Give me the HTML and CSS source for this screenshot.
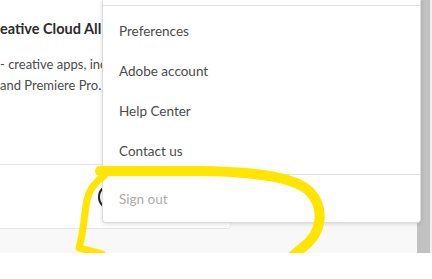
FILE: index.html
```html
<!DOCTYPE html>
<html lang="en">
<head>
  <meta charset="UTF-8">
  <title>Account Menu</title>
  <link rel="stylesheet" href="styles.css">
</head>
<body>
  <div class="screen">
    <div class="page">
      <div class="main">
        <div class="card">
          <div class="card-body">
            <div class="card-text">
              <div class="card-title">eative Cloud All</div>
              <p class="card-desc">- creative apps, inc<br>and Premiere Pro.</p>
            </div>
          </div>
          <div class="card-foot">
            <div class="round-btn"></div>
          </div>
        </div>
      </div>
      <div class="scrollbar">
        <div class="thumb"></div>
      </div>
    </div>

    <div class="menu">
      <div class="menu-top"></div>
      <ul class="menu-list">
        <li>Preferences</li>
        <li>Adobe account</li>
        <li>Help Center</li>
        <li>Contact us</li>
      </ul>
      <div class="menu-item signout">Sign out</div>
    </div>

    <svg class="scribble" width="432" height="253" viewBox="0 0 432 253">
      <path d="M100 171 L200 171 C262 172 297 178 310 192 C324 207 324 232 302 248 L290 258" fill="none" stroke="#ffe500" stroke-width="10" stroke-linecap="round" stroke-linejoin="round"/>
      <path d="M104 176 C95 182 89 190 87 200 C84 215 84 230 79 248 L102 254" fill="none" stroke="#ffe500" stroke-width="7" stroke-linecap="round" stroke-linejoin="round"/>
    </svg>
  </div>
</body>
</html>
```

FILE: styles.css
```css
body {
  margin: 0;
  background: #fff;
  font-family: Lato, "Open Sans", sans-serif;
}
.screen {
  position: relative;
  width: 432px;
  height: 253px;
  overflow: hidden;
}
.page {
  display: flex;
  height: 253px;
}
.main {
  flex: 1;
  background: #f8f8f8;
  overflow: hidden;
}
.card {
  width: 231px;
  background: #fff;
  border-bottom: 1px solid #e4e4e4;
  border-right: 1px solid #ececec;
  border-bottom-right-radius: 4px;
  box-sizing: border-box;
}
.card-body {
  height: 165px;
  padding-top: 19px;
  border-bottom: 1px solid #e6e6e6;
  box-sizing: border-box;
}
.card-text {
  width: 102px;
  white-space: nowrap;
  overflow: hidden;
}
.card-title {
  font-size: 14.5px;
  line-height: 20px;
  font-weight: 700;
  color: #2c2c2c;
}
.card-desc {
  margin: 15px 0 0;
  font-size: 13px;
  line-height: 21px;
  color: #4b4b4b;
}
.card-foot {
  height: 63px;
  display: flex;
  align-items: center;
  padding-left: 98px;
}
.round-btn {
  width: 22px;
  height: 22px;
  border: 2px solid #222;
  border-radius: 50%;
}
.scrollbar {
  width: 15px;
  background: #f0f0f0;
  display: flex;
}
.thumb {
  width: 13px;
  background: #c1c1c1;
}
.menu {
  position: absolute;
  top: 0;
  left: 102px;
  width: 319px;
  background: #fff;
  border: 1px solid #dcdcdc;
  border-top: none;
  border-radius: 0 0 4px 4px;
  box-shadow: 0 1px 4px rgba(0, 0, 0, 0.14);
  box-sizing: border-box;
}
.menu-top {
  height: 5px;
  border-bottom: 1px solid #e1e1e1;
}
.menu-list {
  list-style: none;
  margin: 0;
  padding: 5px 0 3px;
}
.menu-list li, .menu-item {
  height: 40px;
  display: flex;
  align-items: center;
  padding-left: 16px;
  font-size: 13.5px;
  color: #4b4b4b;
}
.signout {
  height: 47px;
  border-top: 1px solid #e1e1e1;
  color: #ababab;
}
.scribble {
  position: absolute;
  top: 0;
  left: 0;
  pointer-events: none;
}
```
